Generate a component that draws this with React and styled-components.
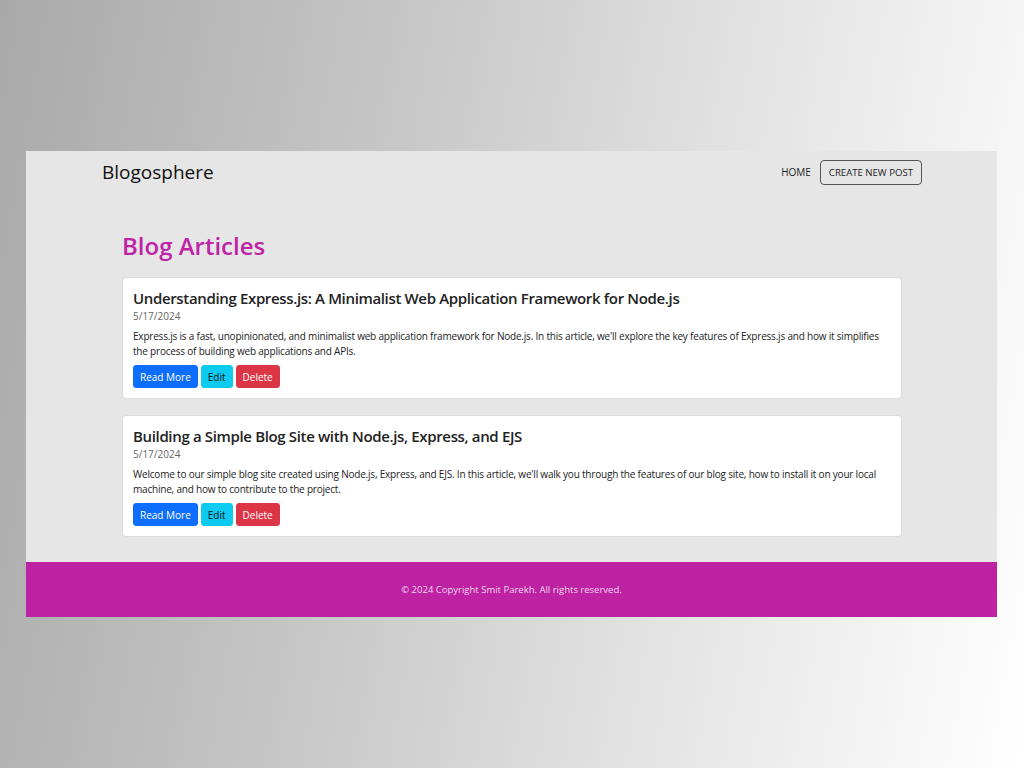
import React from "react";
import styled, { createGlobalStyle } from "styled-components";

const Global = createGlobalStyle`
  html, body { margin: 0; padding: 0; }
  body {
    width: 1024px;
    height: 768px;
    overflow: hidden;
    font-family: "Open Sans", "Noto Sans", sans-serif;
  }
`;

const Backdrop = styled.div`
  width: 1024px;
  height: 768px;
  box-sizing: border-box;
  padding: 151px 27px 0 26px;
  background: linear-gradient(100deg, #a9a9a9 0%, #c6c6c6 35%, #e2e2e2 65%, #ffffff 100%);
`;

const Page = styled.div`
  width: 971px;
  background: #e6e6e6;
  display: flex;
  flex-direction: column;
`;

const Nav = styled.nav`
  height: 42px;
  padding: 0 75px 0 76px;
  display: flex;
  align-items: center;
  justify-content: space-between;
`;

const Brand = styled.a`
  font-size: 19px;
  color: #111;
  text-decoration: none;
`;

const NavLinks = styled.div`
  display: flex;
  align-items: center;
  gap: 9px;
`;

const NavLink = styled.a`
  font-size: 10px;
  color: #222;
  text-decoration: none;
`;

const OutlineButton = styled.a`
  font-size: 9.6px;
  color: #222;
  border: 1px solid #555;
  border-radius: 4px;
  height: 25px;
  box-sizing: border-box;
  padding: 0 8px;
  display: flex;
  align-items: center;
  text-decoration: none;
`;

const Main = styled.main`
  padding: 38px 95px 25px 96px;
  display: flex;
  flex-direction: column;
`;

const Heading = styled.h1`
  margin: 0 0 16px;
  font-size: 24px;
  font-weight: 600;
  line-height: 30px;
  color: #bf24a6;
`;

const List = styled.div`
  display: flex;
  flex-direction: column;
  gap: 16px;
`;

const Card = styled.article`
  background: #fff;
  border: 1px solid #dcdcdc;
  border-radius: 4px;
  padding: 10px 10px 10px 10px;
  display: flex;
  flex-direction: column;
`;

const Title = styled.h2`
  margin: 0;
  font-size: 15px;
  font-weight: 600;
  letter-spacing: -0.35px;
  line-height: 20px;
  color: #222;
`;

const DateText = styled.div`
  font-size: 10px;
  line-height: 14px;
  color: #666;
  margin-top: 1px;
`;

const Body = styled.p`
  margin: 6px 0 6px;
  font-size: 10px;
  letter-spacing: -0.2px;
  line-height: 15px;
  color: #222;
`;

const Actions = styled.div`
  display: flex;
  gap: 3px;
`;

const palette = {
  primary: { bg: "#0d6efd", fg: "#fff" },
  info: { bg: "#0dcaf0", fg: "#111" },
  danger: { bg: "#dc3545", fg: "#fff" },
};

const Btn = styled.button`
  font-family: inherit;
  font-size: 10px;
  height: 23px;
  padding: 0 6px;
  border: 1px solid ${(p) => palette[p.$variant].bg};
  border-radius: 3px;
  background: ${(p) => palette[p.$variant].bg};
  color: ${(p) => palette[p.$variant].fg};
  cursor: pointer;
`;

const Footer = styled.footer`
  height: 55px;
  background: #bc22a2;
  display: flex;
  align-items: center;
  justify-content: center;
  font-size: 9.5px;
  color: #f3d6ee;
`;

const posts = [
  {
    title: "Understanding Express.js: A Minimalist Web Application Framework for Node.js",
    date: "5/17/2024",
    body: "Express.js is a fast, unopinionated, and minimalist web application framework for Node.js. In this article, we'll explore the key features of Express.js and how it simplifies the process of building web applications and APIs.",
  },
  {
    title: "Building a Simple Blog Site with Node.js, Express, and EJS",
    date: "5/17/2024",
    body: "Welcome to our simple blog site created using Node.js, Express, and EJS. In this article, we'll walk you through the features of our blog site, how to install it on your local machine, and how to contribute to the project.",
  },
];

export default function App() {
  return (
    <>
      <Global />
      <Backdrop>
        <Page>
          <Nav>
            <Brand href="#">Blogosphere</Brand>
            <NavLinks>
              <NavLink href="#">HOME</NavLink>
              <OutlineButton href="#">CREATE NEW POST</OutlineButton>
            </NavLinks>
          </Nav>
          <Main>
            <Heading>Blog Articles</Heading>
            <List>
              {posts.map((p) => (
                <Card key={p.title}>
                  <Title>{p.title}</Title>
                  <DateText>{p.date}</DateText>
                  <Body>{p.body}</Body>
                  <Actions>
                    <Btn $variant="primary">Read More</Btn>
                    <Btn $variant="info">Edit</Btn>
                    <Btn $variant="danger">Delete</Btn>
                  </Actions>
                </Card>
              ))}
            </List>
          </Main>
          <Footer>© 2024 Copyright Smit Parekh. All rights reserved.</Footer>
        </Page>
      </Backdrop>
    </>
  );
}
